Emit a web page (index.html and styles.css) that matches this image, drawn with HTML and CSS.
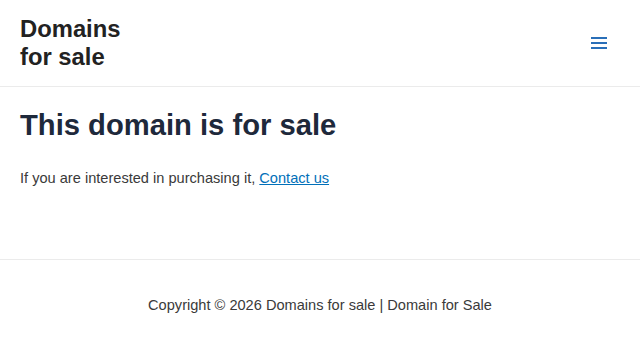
FILE: index.html
```html
<!DOCTYPE html>
<html lang="en">
<head>
<meta charset="utf-8">
<title>Domains for sale</title>
<link rel="stylesheet" href="styles.css">
</head>
<body>
<header class="site-header">
  <div class="brand">Domains<br>for sale</div>
  <button class="menu-toggle" aria-label="Menu">
    <svg width="18" height="18" viewBox="0 0 18 18"><rect x="1" y="3" width="16" height="2" fill="currentColor"/><rect x="1" y="8" width="16" height="2" fill="currentColor"/><rect x="1" y="13" width="16" height="2" fill="currentColor"/></svg>
  </button>
</header>
<main class="content">
  <h1 class="title">This domain is for sale</h1>
  <p class="lead">If you are interested in purchasing it, <a href="#" class="link">Contact us</a></p>
</main>
<footer class="site-footer">
  <p class="copy">Copyright © 2026 Domains for sale | Domain for Sale</p>
</footer>
</body>
</html>
```
FILE: styles.css
```css
* { box-sizing: border-box; }
body {
  margin: 0;
  font-family: "Liberation Sans", Arial, sans-serif;
  background: #fff;
  color: #3a3a3a;
}
.site-header {
  height: 87px;
  display: flex;
  align-items: center;
  justify-content: space-between;
  padding: 0 20px;
  border-bottom: 1px solid #ebebeb;
}
.brand {
  font-size: 23.8px;
  font-weight: 700;
  line-height: 28px;
  color: #222;
}
.menu-toggle {
  background: none;
  border: 0;
  padding: 0;
  margin-right: 12px;
  color: #2a6fb8;
  display: flex;
  width: 18px;
  height: 18px;
}
.content {
  padding: 20px 20px 69px;
  border-bottom: 1px solid #ebebeb;
}
.title {
  margin: 0;
  font-size: 29.2px;
  line-height: 36px;
  font-weight: 700;
  color: #1e293b;
}
.lead {
  margin: 23px 0 0;
  font-size: 14.6px;
  line-height: 24px;
  color: #3a3a3a;
}
.link { color: #0170b9; }
.site-footer {
  padding: 33px 20px;
  text-align: center;
}
.copy {
  margin: 0;
  font-size: 14.6px;
  line-height: 24px;
  color: #3a3a3a;
}
```
